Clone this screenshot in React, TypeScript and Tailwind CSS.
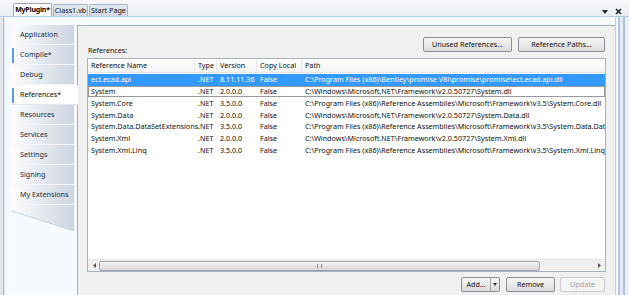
import React from 'react';

const font = { fontFamily: '"Noto Sans", "Liberation Sans", sans-serif' };

const sideTabs = [
  { label: 'Application' },
  { label: 'Compile*', mark: true },
  { label: 'Debug' },
  { label: 'References*', active: true },
  { label: 'Resources' },
  { label: 'Services' },
  { label: 'Settings' },
  { label: 'Signing' },
  { label: 'My Extensions' },
];

const refs = [
  ['ect.ecad.api', '.NET', '8.11.11.36', 'False', 'C:\\Program Files (x86)\\Bentley\\promise V8i\\promise\\promise\\ect.ecad.api.dll'],
  ['System', '.NET', '2.0.0.0', 'False', 'C:\\Windows\\Microsoft.NET\\Framework\\v2.0.50727\\System.dll'],
  ['System.Core', '.NET', '3.5.0.0', 'False', 'C:\\Program Files (x86)\\Reference Assemblies\\Microsoft\\Framework\\v3.5\\System.Core.dll'],
  ['System.Data', '.NET', '2.0.0.0', 'False', 'C:\\Windows\\Microsoft.NET\\Framework\\v2.0.50727\\System.Data.dll'],
  ['System.Data.DataSetExtensions', '.NET', '3.5.0.0', 'False', 'C:\\Program Files (x86)\\Reference Assemblies\\Microsoft\\Framework\\v3.5\\System.Data.DataSetExtensions.dll'],
  ['System.Xml', '.NET', '2.0.0.0', 'False', 'C:\\Windows\\Microsoft.NET\\Framework\\v2.0.50727\\System.Xml.dll'],
  ['System.Xml.Linq', '.NET', '3.5.0.0', 'False', 'C:\\Program Files (x86)\\Reference Assemblies\\Microsoft\\Framework\\v3.5\\System.Xml.Linq.dll'],
];

const Btn = ({ children, className = '', disabled = false }: { children: React.ReactNode; className?: string; disabled?: boolean }) => (
  <div
    className={`flex h-[15px] items-center justify-center rounded-[2px] border text-[7.2px] ${
      disabled
        ? 'border-[#c8ccd2] bg-[#f4f4f4] text-[#a0a0a0]'
        : 'border-[#8a8f96] bg-gradient-to-b from-[#f6f6f6] to-[#dcdcdc] text-[#111]'
    } ${className}`}
  >
    {children}
  </div>
);

export default function App() {
  return (
    <div className="flex h-[295px] w-[629px] flex-col overflow-hidden bg-[#eef1f5]" style={font}>
      {/* document tabs */}
      <div className="flex h-[16px] shrink-0 items-end bg-gradient-to-b from-[#f7f8fa] to-[#e8ecf1] pl-[13px]">
        <div className="flex h-[13px] w-[39px] items-center justify-center rounded-t-[2px] border border-b-0 border-[#9aa6b6] bg-white text-[7px] font-bold tracking-[-0.2px] text-black">
          MyPlugin*
        </div>
        <div className="ml-px flex h-[12px] w-[35px] items-center justify-center rounded-t-[2px] border border-b-0 border-[#a9b4c2] bg-gradient-to-b from-[#e6eaf0] to-[#d3d9e2] text-[7.2px] text-[#111]">
          Class1.vb
        </div>
        <div className="ml-px flex h-[12px] w-[39px] items-center justify-center rounded-t-[2px] border border-b-0 border-[#a9b4c2] bg-gradient-to-b from-[#e6eaf0] to-[#d3d9e2] text-[7.2px] text-[#111]">
          Start Page
        </div>
        <div className="flex-1" />
        <div className="mb-[1px] flex items-center gap-[7px] pr-[7px]">
          <svg width="6" height="4" viewBox="0 0 6 4"><path d="M0 0h6L3 4z" fill="#222" /></svg>
          <svg width="7" height="7" viewBox="0 0 7 7"><path d="M1 1l5 5M6 1l-5 5" stroke="#222" strokeWidth="1.6" /></svg>
        </div>
      </div>

      {/* frame */}
      <div className="flex min-h-0 flex-1 border-t border-[#b7c9e2] bg-[#f6f9fd]">
        <div className="w-[3px] bg-[#e4e6ea]" />
        <div className="w-[2px] border-l border-[#a9c0df] bg-[#dbe6f4]" />

        <div className="flex min-w-0 flex-1 pt-[8px]">
          {/* sidebar */}
          <div className="flex w-[72px] shrink-0 flex-col pl-[7px]">
            <div className="flex flex-col">
              {sideTabs.map((t) => (
                <div
                  key={t.label}
                  className={`relative flex h-[20px] items-center border-b pl-[8px] text-[7.2px] ${
                    t.active
                      ? 'z-10 mr-[-1px] border-[#e3e8ef] bg-white text-[#111]'
                      : 'mr-[3px] border-[#f3f5f9] bg-gradient-to-r from-[#fbfcfd] to-[#cdd4e1] text-[#1e2a3a]'
                  }`}
                >
                  {(t.mark || t.active) && <div className="absolute left-0 top-[3px] h-[15px] w-[2px] bg-[#5a9be6]" />}
                  {t.label}
                </div>
              ))}
            </div>
            <svg width="65" height="26" viewBox="0 0 65 26" className="block">
              <defs>
                <linearGradient id="sg" x1="0" x2="1">
                  <stop offset="0" stopColor="#fbfcfd" />
                  <stop offset="1" stopColor="#cdd4e1" />
                </linearGradient>
              </defs>
              <path d="M0 0H62V26L0 6Z" fill="url(#sg)" />
              <path d="M0 6L62 26" stroke="#c6cfdc" strokeWidth="1" />
            </svg>
          </div>

          {/* content */}
          <div className="flex min-w-0 flex-1 flex-col border-l border-t border-[#9fb0c6] bg-[#f0f0f0] px-[9px] pt-[11px]">
            <div className="flex items-end">
              <div className="mb-[-4px] pl-px text-[7.2px] text-[#111]">References:</div>
              <div className="flex-1" />
              <Btn className="w-[89px]">Unused References...</Btn>
              <Btn className="ml-[6px] mr-px w-[87px]">Reference Paths...</Btn>
            </div>

            {/* list */}
            <div className="mt-[6px] flex h-[214px] flex-col border border-[#aab2bd] bg-white text-[7.2px] text-[#111]">
              <div className="flex h-[14px] shrink-0 items-center border-b border-[#e2e5ea] bg-gradient-to-b from-white to-[#f3f4f6]">
                <div className="w-[107px] shrink-0 border-r border-[#e2e5ea] pl-[3px]">Reference Name</div>
                <div className="w-[22px] shrink-0 border-r border-[#e2e5ea] pl-[3px]">Type</div>
                <div className="w-[40px] shrink-0 border-r border-[#e2e5ea] pl-[3px]">Version</div>
                <div className="w-[45px] shrink-0 border-r border-[#e2e5ea] pl-[3px]">Copy Local</div>
                <div className="flex-1 pl-[3px]">Path</div>
              </div>
              <div className="flex min-h-0 flex-1 flex-col overflow-hidden pt-px">
                {refs.map((r, i) => (
                  <div
                    key={r[0]}
                    className={`flex h-[11.7px] shrink-0 items-center whitespace-nowrap ${
                      i === 0 ? 'bg-[#3399ff] text-white' : i === 1 ? 'outline outline-1 -outline-offset-1 outline-[#9a9a9a]' : ''
                    }`}
                  >
                    <div className="w-[107px] shrink-0 pl-[3px]">{r[0]}</div>
                    <div className="w-[22px] shrink-0 pl-[3px]">{r[1]}</div>
                    <div className="w-[40px] shrink-0 pl-[3px]">{r[2]}</div>
                    <div className="w-[45px] shrink-0 pl-[3px]">{r[3]}</div>
                    <div className="min-w-0 flex-1 overflow-hidden pl-[3px]">{r[4]}</div>
                  </div>
                ))}
              </div>
              {/* horizontal scrollbar */}
              <div className="flex h-[12px] shrink-0 items-center border-t border-[#e6e6e6] bg-[#f0f0f0] px-px">
                <div className="flex w-[10px] justify-center">
                  <svg width="3" height="5" viewBox="0 0 3 5"><path d="M3 0v5L0 2.5z" fill="#555" /></svg>
                </div>
                <div className="flex h-[10px] w-[441px] items-center justify-center rounded-[2px] border border-[#9ea4ab] bg-gradient-to-b from-[#f3f3f3] to-[#d8d8d8]">
                  <div className="h-[4px] w-[5px] border-x border-[#8a8a8a]" />
                </div>
                <div className="flex-1" />
                <div className="flex w-[10px] justify-center">
                  <svg width="3" height="5" viewBox="0 0 3 5"><path d="M0 0v5L3 2.5z" fill="#555" /></svg>
                </div>
              </div>
            </div>

            <div className="mt-[5px] flex justify-end">
              <div className="flex h-[15px] w-[39px] items-center rounded-[2px] border border-[#8a8f96] bg-gradient-to-b from-[#f6f6f6] to-[#dcdcdc] text-[7.2px] text-[#111]">
                <div className="flex-1 text-center">Add...</div>
                <div className="flex h-full w-[9px] items-center justify-center border-l border-[#a0a4aa]">
                  <svg width="4" height="3" viewBox="0 0 4 3"><path d="M0 0h4L2 3z" fill="#333" /></svg>
                </div>
              </div>
              <Btn className="ml-[6px] w-[49px]">Remove</Btn>
              <Btn disabled className="ml-[5px] mr-px w-[45px]">Update</Btn>
            </div>
          </div>
        </div>

        {/* right frame */}
        <div className="flex w-[14px] shrink-0">
          <div className="w-[3px] border-l border-[#c2cfe0] bg-[#f3f6fa]" />
          <div className="w-[2px] bg-[#b2c6e2]" />
          <div className="w-[3px] bg-[#e2ebf6]" />
          <div className="w-[2px] bg-[#a9c0df]" />
          <div className="flex-1 bg-[#eef1f5]" />
        </div>
      </div>
    </div>
  );
}
